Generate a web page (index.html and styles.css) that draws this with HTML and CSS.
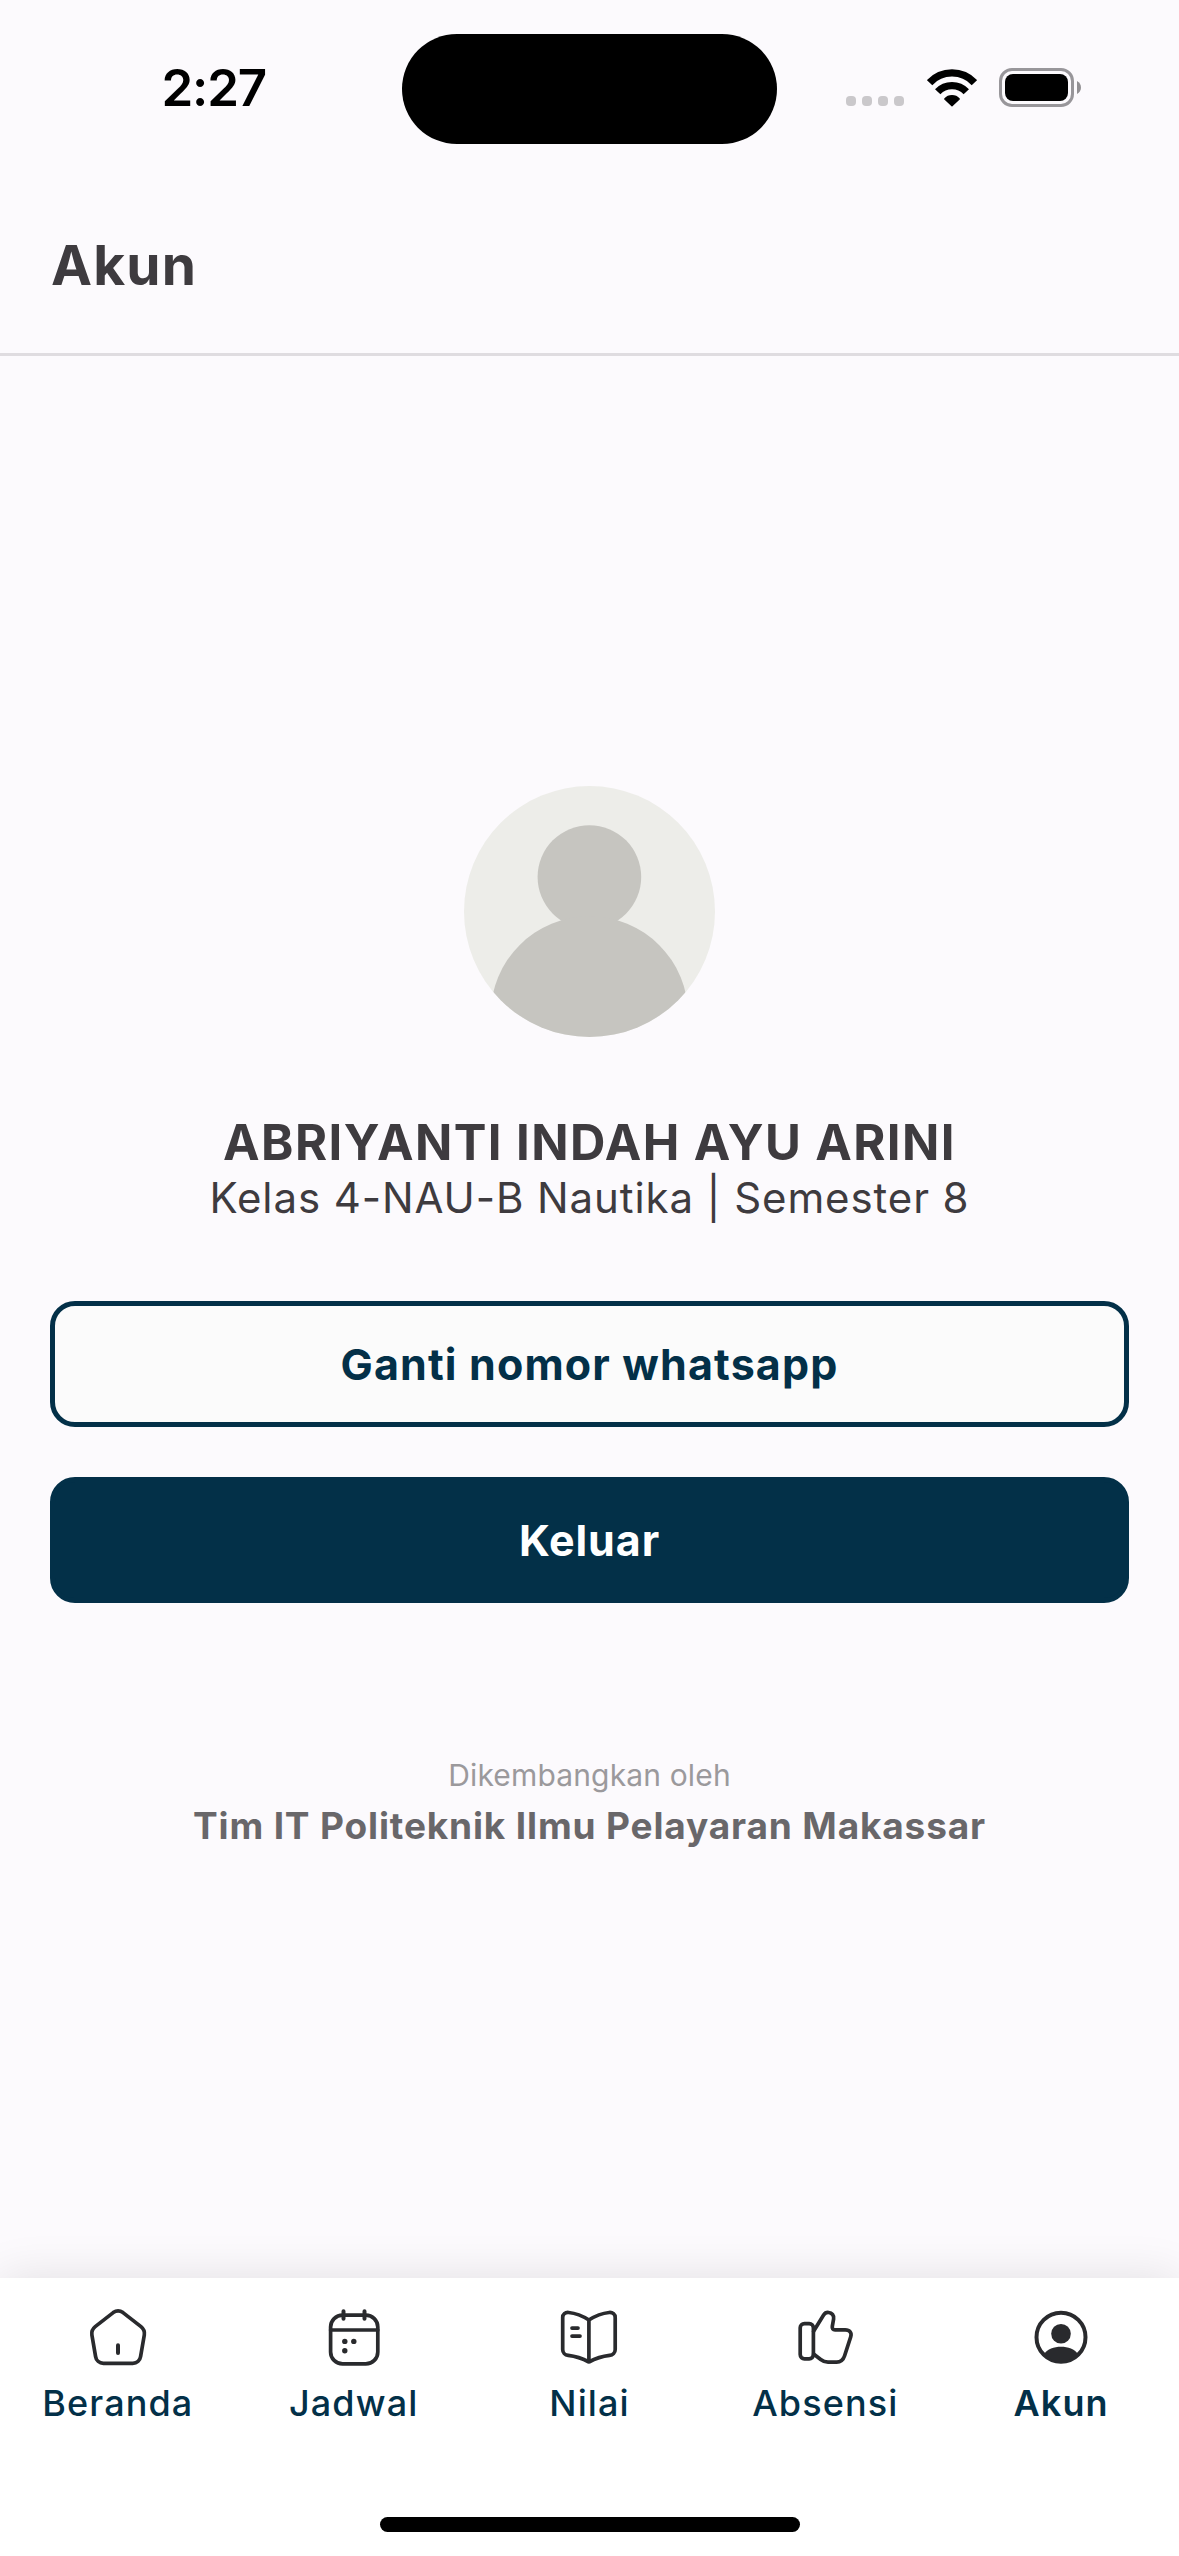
FILE: index.html
```html
<!DOCTYPE html>
<html lang="id">
<head>
<meta charset="utf-8">
<title>Akun</title>
<link rel="stylesheet" href="styles.css">
</head>
<body>
<div class="screen">
  <div class="status-bar">
    <div class="status-left"><span class="time">2:27</span></div>
    <div class="island"></div>
    <div class="status-right">
      <div class="signal"><i></i><i></i><i></i><i></i></div>
      <svg class="wifi" viewBox="0 0 50 38" fill="none" stroke="#000" stroke-width="7.4">
        <path d="M2.6 13.6A30.7 30.7 0 0 1 47.4 13.6"/>
        <path d="M10.7 22.7A19.8 19.8 0 0 1 39.3 22.7"/>
        <path d="M17.8 30A9.6 9.6 0 0 1 32.2 30L25 36.7Z" fill="#000" stroke-width="1.4" stroke-linejoin="round"/>
      </svg>
      <div class="battery">
        <div class="battery-body"><div class="battery-level"></div></div>
        <svg class="battery-nub" viewBox="0 0 4 13"><path d="M0 0C5.3 2.8 5.3 10.2 0 13Z" fill="#929093"/></svg>
      </div>
    </div>
  </div>

  <header class="header"><h1 class="title">Akun</h1></header>

  <main class="content">
    <svg class="avatar" viewBox="0 0 251 251">
      <defs><clipPath id="avatar-clip"><circle cx="125.5" cy="125.5" r="125.5"/></clipPath></defs>
      <g clip-path="url(#avatar-clip)">
        <rect width="251" height="251" fill="#edede9"/>
        <circle cx="125.4" cy="91" r="51.8" fill="#c6c5c0"/>
        <circle cx="125.4" cy="229" r="98.8" fill="#c6c5c0"/>
      </g>
    </svg>
    <h2 class="name">ABRIYANTI INDAH AYU ARINI</h2>
    <p class="class-info">Kelas 4-NAU-B Nautika | Semester 8</p>
    <div class="actions">
      <button class="btn btn-outline">Ganti nomor whatsapp</button>
      <button class="btn btn-solid">Keluar</button>
    </div>
    <p class="credit">Dikembangkan oleh</p>
    <p class="team">Tim IT Politeknik Ilmu Pelayaran Makassar</p>
  </main>

  <nav class="tab-bar">
    <div class="tabs">
      <a class="tab">
        <svg class="icon" viewBox="0 0 72 72">
          <path d="M31.2 11.6L13.2 25.6C10.6 27.7 9.4 30.8 9.9 34L13.6 55.6C14.2 59.6 17.4 62.3 21.4 62.3H50.8C54.8 62.3 58 59.6 58.6 55.6L62.3 34C62.8 30.8 61.6 27.7 59 25.6L41 11.6C38 9.4 34.2 9.4 31.2 11.6Z"/>
          <path d="M36 44.3V52" stroke-width="4"/>
        </svg>
        <span>Beranda</span>
      </a>
      <a class="tab">
        <svg class="icon" viewBox="0 0 72 72">
          <rect x="12.6" y="14.1" width="47.2" height="48.8" rx="12"/>
          <path d="M12.6 29H59.8"/>
          <path d="M25.5 10.2V17.8M46.5 10.2V17.8" stroke-width="4"/>
          <g class="dots"><circle cx="26.8" cy="40.4" r="2.7"/><circle cx="35.8" cy="40.4" r="2.7"/><circle cx="26.8" cy="49.7" r="2.7"/></g>
        </svg>
        <span>Jadwal</span>
      </a>
      <a class="tab">
        <svg class="icon" viewBox="0 0 72 72">
          <path d="M35.9 19C30 15.2 22.4 12.2 15.6 11.5C12.2 11.2 9.7 13.2 9.7 16.4V48.4C9.7 51.6 12 54 15.2 54.4C22.2 55.2 29.6 57.6 35.9 61C42.2 57.6 49.6 55.2 56.6 54.4C59.8 54 62.2 51.6 62.2 48.4V16.4C62.2 13.2 59.7 11.2 56.2 11.5C49.4 12.2 41.8 15.2 35.9 19ZM35.9 19V61"/>
          <path d="M19 27.1H25M19 35.1H27"/>
        </svg>
        <span>Nilai</span>
      </a>
      <a class="tab">
        <svg class="icon" viewBox="0 0 72 72">
          <rect x="11.2" y="22.6" width="13.2" height="35.2" rx="4.2"/>
          <path d="M24.6 30.2L34.6 14C36 11.8 37.7 11.3 39.6 11.5C42.9 11.8 45.2 14.4 44.6 18L43.3 25.4C43 27.4 43.9 28.9 46 28.9H56.2C60.8 28.9 63 32 61.7 35.8L55.6 54.8C54.4 58.6 52 61.2 47.6 61.2H39C36 61.2 33.9 60.2 31.7 58.5L24.6 53"/>
        </svg>
        <span>Absensi</span>
      </a>
      <a class="tab active">
        <svg class="icon" viewBox="0 0 72 72">
          <circle cx="36" cy="36.2" r="24.5" stroke-width="4"/>
          <g class="dots"><circle cx="36" cy="32.8" r="9.8"/><path d="M19.6 52.6C24.4 43.4 47.6 43.4 52.4 52.6C43.4 63.6 28.6 63.6 19.6 52.6Z"/></g>
        </svg>
        <span>Akun</span>
      </a>
    </div>
    <div class="home-indicator"></div>
  </nav>
</div>
</body>
</html>
```

FILE: styles.css
```css
* { box-sizing: border-box; margin: 0; padding: 0; }

body {
  width: 1179px;
  height: 2556px;
  overflow: hidden;
  background: #fcfafd;
  color: #3e3b3f;
  font-family: Inter, "Liberation Sans", sans-serif;
}

.screen { display: flex; flex-direction: column; height: 2556px; }

/* Status bar */
.status-bar {
  display: grid;
  grid-template-columns: 402px 375px 402px;
  align-items: center;
  height: 178px;
}
.status-left { padding: 0 0 3px 161.5px; }
.time { color: #000; font-size: 51px; font-weight: 600; letter-spacing: -1.2px; line-height: 62px; }
.island { height: 110px; border-radius: 55px; background: #000; }
.status-right { display: flex; align-items: center; height: 39px; margin-bottom: 3px; padding-left: 69px; }
.signal { display: flex; gap: 6px; align-self: flex-end; margin-bottom: 1px; }
.signal i { width: 10px; height: 10px; border-radius: 4px; background: #cac8cb; }
.wifi { width: 50px; height: 38px; margin-left: 22.5px; }
.battery { display: flex; align-items: center; gap: 3px; margin-left: 22.5px; }
.battery-body { width: 75px; height: 39px; padding: 3px; border: 3px solid #98969a; border-radius: 13px; }
.battery-level { height: 27px; border-radius: 8px; background: #000; }
.battery-nub { width: 4px; height: 13px; }

/* Header */
.header {
  display: flex;
  align-items: center;
  height: 178px;
  padding: 0 0 2px 51px;
  border-bottom: 3px solid #dfdce0;
}
.title { font-size: 55px; font-weight: 700; letter-spacing: 1.2px; line-height: 66px; }

/* Profile */
.content {
  display: flex;
  flex: 1;
  flex-direction: column;
  align-items: center;
  padding: 430px 50px 0;
  text-align: center;
}
.avatar { width: 251px; height: 251px; }
.name { margin-top: 76px; font-size: 49px; font-weight: 700; letter-spacing: 1.4px; line-height: 60px; }
.class-info { margin-top: -1px; font-size: 42px; letter-spacing: 0.9px; line-height: 52px; }
.actions { display: flex; flex-direction: column; gap: 50px; width: 100%; margin-top: 77px; }
.btn {
  height: 126px;
  border: 5px solid #033048;
  border-radius: 25px;
  font-family: inherit;
  font-size: 43px;
  font-weight: 700;
  letter-spacing: 1.15px;
}
.btn-outline { background: #fbfbfb; color: #033048; }
.btn-solid { background: #033048; color: #fff; letter-spacing: 0.9px; }
.credit { margin-top: 152px; color: #9b999c; font-size: 30px; letter-spacing: 0.15px; line-height: 40px; }
.team { margin-top: 3px; color: #69676a; font-size: 37px; font-weight: 700; letter-spacing: 0.85px; line-height: 56px; }

/* Bottom tabs */
.tab-bar {
  display: flex;
  flex-direction: column;
  justify-content: space-between;
  align-items: center;
  height: 278px;
  padding: 23px 0 24px;
  background: #fff;
  box-shadow: 0 0 45px rgba(0, 0, 0, 0.11);
}
.tabs { display: grid; grid-template-columns: repeat(5, 1fr); width: 100%; }
.tab { display: flex; flex-direction: column; align-items: center; color: #033048; font-size: 36px; font-weight: 500; letter-spacing: 1.1px; line-height: 60px; }
.tab.active { font-weight: 600; }
.icon { width: 72px; height: 72px; fill: none; stroke: #292a2d; stroke-width: 3.7; stroke-linecap: round; stroke-linejoin: round; }
.icon .dots { fill: #292a2d; stroke: none; }
.home-indicator { width: 420px; height: 15px; border-radius: 8px; background: #000; }
```
